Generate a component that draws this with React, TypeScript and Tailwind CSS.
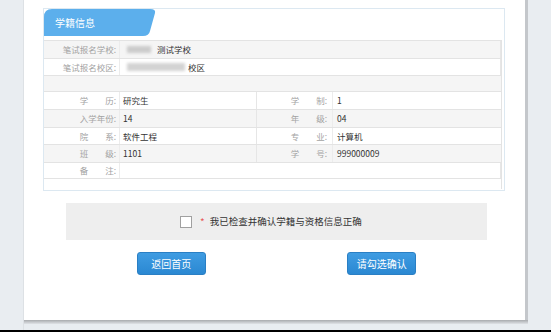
import React from "react";

const font = { fontFamily: '"Noto Sans CJK SC", "Noto Sans", sans-serif' };

function Label({ children }: { children: React.ReactNode }) {
  return (
    <div className="w-[76px] shrink-0 self-stretch flex items-center justify-end border-r border-[#ececec] pr-[3px] text-[8.5px] text-[#a3a3a3] leading-none">
      {children}
    </div>
  );
}

function Row({
  gray,
  l1,
  v1,
  l2,
  v2,
  h,
}: {
  gray?: boolean;
  l1: string;
  v1?: React.ReactNode;
  l2?: string;
  v2?: string;
  h: string;
}) {
  return (
    <div className={`flex items-center border-t border-[#e3e3e3] ${gray ? "bg-[#f5f5f5]" : "bg-white"} ${h}`}>
      <Label>{l1}</Label>
      <div className={`${l2 !== undefined ? "w-[137px]" : "flex-1"} self-stretch flex items-center pl-[3px] text-[8.5px] text-[#333] border-r border-[#e6e6e6]`}>
        {v1}
      </div>
      {l2 !== undefined && (
        <>
          <div className="w-[76px] self-stretch flex items-center justify-end border-r border-[#ececec] pr-[5px] text-[8.5px] text-[#a3a3a3]">
            {l2}
          </div>
          <div className="flex-1 self-stretch flex items-center pl-[4px] text-[8.5px] text-[#333]">{v2}</div>
        </>
      )}
    </div>
  );
}

export default function App() {
  return (
    <div className="w-[551px] h-[332px] bg-[#e9edf1] flex flex-col overflow-hidden" style={font}>
      <div className="flex h-[330px]">
        <div className="w-[24px] shrink-0 border-r border-[#dde1e5]" />
        <div className="w-[504px] shrink-0 h-[324px] flex flex-col">
          <div className="h-[320px] bg-white border-r-[3px] border-[#c4c7cb] flex flex-col pl-[19px] pt-[8px]">
            <div className="w-[462px] h-[183px] border border-[#dce8f1] flex flex-col pr-[2px]">
              <div className="h-[31px] flex items-start">
                <div className="relative w-[112px] h-[27px] flex items-center pl-[11px]">
                  <svg className="absolute inset-0" width="112" height="27" viewBox="0 0 112 27">
                    <path d="M0 27 L0 8 Q0 0 8 0 L106 0 Q112 0 111 4 L106 22 Q105 27 99 27 Z" fill="#5cafec" />
                  </svg>
                  <span className="relative text-white text-[10px]">学籍信息</span>
                </div>
              </div>
              <div className="flex flex-col border-r border-[#e3e3e3]">
                <Row
                  gray
                  h="h-[18px]"
                  l1="笔试报名学校:"
                  v1={
                    <div className="flex items-center">
                      <div className="w-[24px] h-[7px] bg-[#cbcbcb] blur-[1.5px] ml-[4px]" />
                      <span className="ml-[6px]">测试学校</span>
                    </div>
                  }
                />
                <Row
                  h="h-[17px]"
                  l1="笔试报名校区:"
                  v1={
                    <div className="flex items-center">
                      <div className="w-[58px] h-[8px] bg-[#d3d3d3] blur-[1.5px] ml-[4px]" />
                      <span className="ml-[3px]">校区</span>
                    </div>
                  }
                />
                <div className="h-[16px] bg-[#f5f5f5] border-t border-[#e3e3e3]" />
                <Row h="h-[18px]" l1="学　　历:" v1="研究生" l2="学　　制:" v2="1" />
                <Row gray h="h-[18px]" l1="入学年份:" v1="14" l2="年　　级:" v2="04" />
                <Row h="h-[17px]" l1="院　　系:" v1="软件工程" l2="专　　业:" v2="计算机" />
                <Row gray h="h-[18px]" l1="班　　级:" v1="1101" l2="学　　号:" v2="999000009" />
                <Row h="h-[16px]" l1="备　　注:" />
                <div className="h-[11px] border-t border-[#e3e3e3]" />
              </div>
            </div>
            <div className="w-[421px] ml-[23px] mt-[12px] h-[37px] bg-[#eeeeee] flex items-center pl-[114px]">
              <div className="w-[12px] h-[12px] border border-[#a0a0a0] bg-white" />
              <span className="ml-[8px] text-[#e85a5a] text-[10px]">*</span>
              <span className="ml-[5px] text-[9.5px] text-[#333]">我已检查并确认学籍与资格信息正确</span>
            </div>
            <div className="w-[421px] ml-[23px] mt-[12px] flex justify-around">
              <button className="w-[69px] h-[23px] rounded-[3px] bg-gradient-to-b from-[#3f9ce2] to-[#2a88d2] border border-[#2a7fc4] text-white text-[10px]">
                返回首页
              </button>
              <button className="w-[69px] h-[23px] rounded-[3px] bg-gradient-to-b from-[#3f9ce2] to-[#2a88d2] border border-[#2a7fc4] text-white text-[10px]">
                请勾选确认
              </button>
            </div>
          </div>
          <div className="h-[4px] bg-gradient-to-b from-[#a9abae] to-[#e0e3e7]" />
        </div>
        <div className="flex-1" />
      </div>
      <div className="h-[2px] bg-black" />
    </div>
  );
}
